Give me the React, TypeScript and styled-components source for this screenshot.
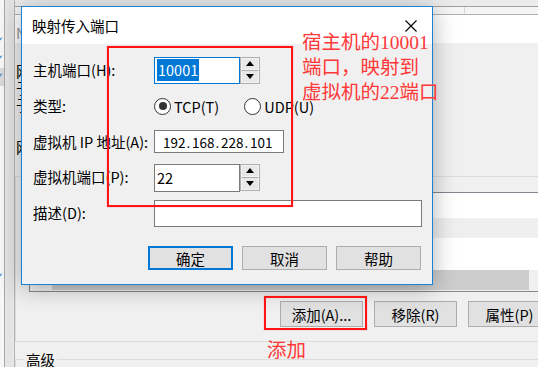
import React from "react";
import styled, { createGlobalStyle } from "styled-components";

const GlobalStyle = createGlobalStyle`
  html, body { margin: 0; padding: 0; background: #f0f0f0; overflow: hidden; }
  body { font-family: "Noto Sans CJK SC", "Noto Sans", sans-serif; font-size: 14.5px; color: #000; }
  #root { width: 538px; height: 367px; }
  * { box-sizing: border-box; }
`;

/* ---------- desktop ---------- */
const Screen = styled.div`
  position: relative;
  width: 538px;
  height: 367px;
  overflow: hidden;
  display: flex;
  align-items: flex-start;
  background: #f0f0f0;
`;

/* left, mostly hidden window */
const SideWindow = styled.div`
  flex: 0 0 14px;
  height: 367px;
  display: flex;
  background: linear-gradient(to right, #ececec 0, #e2e2e2 70%, #e8e8e8 100%);
`;
const SideList = styled.div`
  width: 5px;
  height: 100%;
  border-right: 1px solid #a8a8a8;
  background: #f7f7f7;
  display: flex;
  flex-direction: column;
  padding-top: 32px;
  overflow: hidden;
  & > * { flex-shrink: 0; }
`;
const SideRow = styled.div<{ $selected?: boolean; $gap?: number }>`
  height: 18px;
  margin-top: ${(p) => p.$gap ?? 0}px;
  background: ${(p) => (p.$selected ? "#d9d9d9" : "transparent")};
  display: flex;
  align-items: center;
  font-family: "DejaVu Sans", sans-serif;
  font-size: 12px;
  color: #2a6fc6;
  & > span { margin-left: -6px; }
`;

/* NAT settings window behind */
const MainWindow = styled.div`
  flex: 0 0 560px;
  display: flex;
  flex-direction: column;
  border-left: 1px solid #b4b4b4;
  & > * { flex-shrink: 0; }
`;
const TopStrip = styled.div`
  height: 6px;
  background: #ebebeb;
`;
const HeaderBar = styled.div`
  height: 9px;
  border-top: 1px solid #a0a0a0;
  border-bottom: 1px solid #b0b0b0;
  background: #f5f5f5;
  display: flex;
  padding-left: 449px;
`;
const HeaderDivider = styled.div`
  width: 1px;
  background: #d6d6d6;
`;
const BackTitle = styled.div`
  height: 28px;
  background: #fff;
  color: #9a9a9a;
  display: flex;
  align-items: center;
  padding: 6px 0 0 1px;
`;
const BackBody = styled.div`
  display: flex;
  flex-direction: column;
  padding-top: 19px;
  & > * { flex-shrink: 0; }
`;
const BackLabel = styled.div<{ $gap?: number }>`
  height: 17px;
  line-height: 17px;
  padding-left: 1px;
  margin-top: ${(p) => p.$gap ?? 0}px;
  white-space: nowrap;
`;
const GroupBox = styled.div`
  margin-top: 21px;
  width: 550px;
  height: 166px;
  border: 1px solid #dcdcdc;
  padding: 15px 13px 0 13px;
  display: flex;
  flex-direction: column;
  & > * { flex-shrink: 0; }
`;
const ListView = styled.div`
  height: 100px;
  border: 1px solid #828790;
  background: #fff;
  display: flex;
  flex-direction: column;
  & > * { flex-shrink: 0; }
`;
const ListRow = styled.div<{ $h: number; $alt?: boolean }>`
  height: ${(p) => p.$h}px;
  background: ${(p) => (p.$alt ? "#efefef" : "#fff")};
`;
const HScroll = styled.div`
  height: 21px;
  background: #f0f0f0;
  padding: 0 21px 1px 22px;
  display: flex;
`;
const HThumb = styled.div`
  flex: 1;
  background: #cdcdcd;
`;
const BackButtons = styled.div`
  margin-top: 9px;
  display: flex;
  justify-content: flex-end;
  gap: 11px;
`;
const WinButton = styled.div`
  width: 83px;
  height: 26px;
  flex-shrink: 0;
  border: 1px solid #adadad;
  background: #e1e1e1;
  display: flex;
  align-items: center;
  justify-content: center;
  white-space: nowrap;
`;
const Fieldset = styled.fieldset`
  margin: 9px 0 0 0;
  width: 550px;
  height: 60px;
  border: 1px solid #dcdcdc;
  padding: 0;
  & > legend {
    margin-left: 8px;
    padding: 0 2px;
    line-height: 17px;
  }
`;

/* ---------- dialog ---------- */
const Dialog = styled.div`
  position: absolute;
  left: 21px;
  top: 6px;
  width: 412px;
  height: 279px;
  border: 1px solid #1883d7;
  background: #f0f0f0;
  box-shadow: 0 3px 22px rgba(0, 0, 0, 0.3);
  display: flex;
  flex-direction: column;
  & > * { flex-shrink: 0; }
`;
const TitleBar = styled.div`
  height: 37px;
  background: #fff;
  display: flex;
  align-items: center;
  justify-content: space-between;
  padding: 0 15px 0 10px;
`;
const CloseIcon = styled.svg`
  width: 12px;
  height: 12px;
`;
const DialogBody = styled.div`
  padding: 7px 10px 0 11px;
  display: flex;
  flex-direction: column;
`;
const FormGrid = styled.div`
  display: grid;
  grid-template-columns: 121px 1fr;
  grid-template-rows: 38px 34px 37px 34px 38px;
  align-items: center;
`;
const Label = styled.div`
  white-space: nowrap;
  line-height: 18px;
`;
const SpinField = styled.div`
  display: flex;
  height: 27px;
`;
const TextBox = styled.div<{ $w?: number; $h?: number; $focus?: boolean }>`
  width: ${(p) => (p.$w ? `${p.$w}px` : "100%")};
  height: ${(p) => p.$h ?? 27}px;
  border: 1px solid ${(p) => (p.$focus ? "#0078d7" : "#7a7a7a")};
  background: #fff;
  display: flex;
  align-items: center;
  padding-left: 2px;
  white-space: nowrap;
`;
const Selected = styled.span`
  background: #0078d7;
  color: #fff;
  line-height: 22px;
  padding: 0 1px;
`;
const Spinner = styled.div`
  width: 20px;
  display: flex;
  flex-direction: column;
  border: 1px solid #adadad;
  background: #f0f0f0;
`;
const SpinBtn = styled.div<{ $down?: boolean }>`
  flex: 1;
  display: flex;
  align-items: center;
  justify-content: center;
  background: #e8e8e8;
  border: 1px solid #f4f4f4;
  border-top: ${(p) => (p.$down ? "1px solid #adadad" : "1px solid #f4f4f4")};
`;
const RadioGroup = styled.div`
  display: flex;
  align-items: center;
  gap: 25px;
`;
const RadioItem = styled.label`
  display: flex;
  align-items: center;
  gap: 3px;
  white-space: nowrap;
`;
const RadioCircle = styled.span<{ $checked?: boolean }>`
  width: 17px;
  height: 17px;
  border: 1px solid #333;
  border-radius: 50%;
  background: #fff;
  display: inline-flex;
  align-items: center;
  justify-content: center;
  &::after {
    content: "";
    width: 8px;
    height: 8px;
    border-radius: 50%;
    background: ${(p) => (p.$checked ? "#333" : "transparent")};
  }
`;
const IpBox = styled.div`
  width: 130px;
  height: 23px;
  border: 1px solid #7a7a7a;
  background: #fff;
  display: flex;
  align-items: center;
  padding-left: 8px;
  font-size: 13.5px;
  white-space: nowrap;
`;
const Octet = styled.span`
  width: 22px;
  flex-shrink: 0;
  text-align: left;
`;
const IpDot = styled.span`
  width: 7px;
  flex-shrink: 0;
  text-align: center;
`;
const DialogButtons = styled.div`
  margin-top: 14px;
  margin-right: 1px;
  display: flex;
  justify-content: flex-end;
  gap: 9px;
`;
const DialogButton = styled.div<{ $default?: boolean }>`
  width: 85px;
  height: 24px;
  background: #e1e1e1;
  border: ${(p) => (p.$default ? "2px solid #0078d7" : "1px solid #adadad")};
  display: flex;
  align-items: center;
  justify-content: center;
`;

/* ---------- red annotations ---------- */
const RedBox = styled.div<{ $x: number; $y: number; $w: number; $h: number }>`
  position: absolute;
  left: ${(p) => p.$x}px;
  top: ${(p) => p.$y}px;
  width: ${(p) => p.$w}px;
  height: ${(p) => p.$h}px;
  border: 2px solid #ff1414;
  box-shadow: 0 0 1px rgba(255, 60, 60, 0.6);
`;
const RedNote = styled.div<{ $x: number; $y: number }>`
  position: absolute;
  left: ${(p) => p.$x}px;
  top: ${(p) => p.$y}px;
  color: #ff3838;
  font-family: "Liberation Serif", "Noto Sans CJK SC", serif;
  font-size: 19.5px;
  line-height: 25px;
  white-space: nowrap;
`;

const Tri = ({ down }: { down?: boolean }) => (
  <svg width="8" height="5" viewBox="0 0 8 5">
    <polygon points={down ? "0,0 8,0 4,5" : "0,5 8,5 4,0"} fill="#000" />
  </svg>
);

export default function App() {
  return (
    <>
      <GlobalStyle />
      <Screen>
        <SideWindow>
          <SideList>
            <SideRow><span>✓</span></SideRow>
            <SideRow><span>✓</span></SideRow>
            <SideRow $selected><span>✓</span></SideRow>
            <SideRow $gap={182}><span>✓</span></SideRow>
          </SideList>
        </SideWindow>

        <MainWindow>
          <TopStrip />
          <HeaderBar>
            <HeaderDivider />
          </HeaderBar>
          <BackTitle>NAT 设置</BackTitle>
          <BackBody>
            <BackLabel>网络:</BackLabel>
            <BackLabel>子网 IP:</BackLabel>
            <BackLabel>子网掩码:</BackLabel>
            <BackLabel $gap={25}>网关 IP(G):</BackLabel>
            <GroupBox>
              <ListView>
                <ListRow $h={25} />
                <ListRow $h={20} $alt />
                <ListRow $h={32} />
                <HScroll>
                  <HThumb />
                </HScroll>
              </ListView>
              <BackButtons>
                <WinButton>添加(A)...</WinButton>
                <WinButton>移除(R)</WinButton>
                <WinButton>属性(P)</WinButton>
              </BackButtons>
            </GroupBox>
            <Fieldset>
              <legend>高级</legend>
            </Fieldset>
          </BackBody>
        </MainWindow>

        <Dialog>
          <TitleBar>
            <span>映射传入端口</span>
            <CloseIcon viewBox="0 0 12 12">
              <path d="M0.5 0.5 L11.5 11.5 M11.5 0.5 L0.5 11.5" stroke="#000" strokeWidth="1.1" fill="none" />
            </CloseIcon>
          </TitleBar>
          <DialogBody>
            <FormGrid>
              <Label>主机端口(H):</Label>
              <SpinField>
                <TextBox $w={86} $focus>
                  <Selected>10001</Selected>
                </TextBox>
                <Spinner>
                  <SpinBtn><Tri /></SpinBtn>
                  <SpinBtn $down><Tri down /></SpinBtn>
                </Spinner>
              </SpinField>

              <Label>类型:</Label>
              <RadioGroup>
                <RadioItem><RadioCircle $checked />TCP(T)</RadioItem>
                <RadioItem><RadioCircle />UDP(U)</RadioItem>
              </RadioGroup>

              <Label>虚拟机 IP 地址(A):</Label>
              <IpBox>
                <Octet>192</Octet><IpDot>.</IpDot>
                <Octet>168</Octet><IpDot>.</IpDot>
                <Octet>228</Octet><IpDot>.</IpDot>
                <Octet>101</Octet>
              </IpBox>

              <Label>虚拟机端口(P):</Label>
              <SpinField>
                <TextBox $w={86} $h={28}>22</TextBox>
                <Spinner>
                  <SpinBtn><Tri /></SpinBtn>
                  <SpinBtn $down><Tri down /></SpinBtn>
                </Spinner>
              </SpinField>

              <Label>描述(D):</Label>
              <TextBox />
            </FormGrid>
            <DialogButtons>
              <DialogButton $default>确定</DialogButton>
              <DialogButton>取消</DialogButton>
              <DialogButton>帮助</DialogButton>
            </DialogButtons>
          </DialogBody>
        </Dialog>

        <RedBox $x={107} $y={46} $w={186} $h={161} />
        <RedNote $x={302} $y={30}>
          宿主机的10001
          <br />
          端口，映射到
          <br />
          虚拟机的22端口
        </RedNote>
        <RedBox $x={264} $y={296} $w={103} $h={34} />
        <RedNote $x={267} $y={338}>添加</RedNote>
      </Screen>
    </>
  );
}
